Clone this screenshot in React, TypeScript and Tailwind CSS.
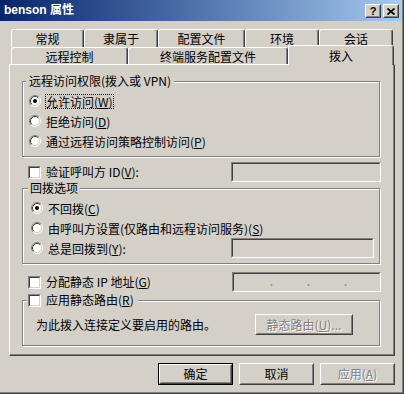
import React from "react";

function Raised({ className = "", children }: { className?: string; children?: React.ReactNode }) {
  return (
    <div className={`flex border border-t-white border-l-white border-r-[#404040] border-b-[#404040] ${className}`}>
      <div className="flex-1 flex items-center justify-center border border-t-[#d4d0c8] border-l-[#d4d0c8] border-r-[#808080] border-b-[#808080]">
        {children}
      </div>
    </div>
  );
}

function Sunken({ className = "", white = false, children }: { className?: string; white?: boolean; children?: React.ReactNode }) {
  return (
    <div className={`flex shrink-0 border border-t-[#808080] border-l-[#808080] border-r-white border-b-white ${className}`}>
      <div className={`flex-1 flex border border-t-[#404040] border-l-[#404040] border-r-[#d4d0c8] border-b-[#d4d0c8] ${white ? "bg-white" : "bg-[#d4d0c8]"}`}>
        {children}
      </div>
    </div>
  );
}

function Btn({ className = "", children, def = false, disabled = false }: { className?: string; children: React.ReactNode; def?: boolean; disabled?: boolean }) {
  const label = <span className={`leading-[14px] ${disabled ? "text-[#808080] [text-shadow:1px_1px_0_#fff]" : ""}`}>{children}</span>;
  if (def) {
    return (
      <div className={`flex border border-black ${className}`}>
        <Raised className="flex-1">{label}</Raised>
      </div>
    );
  }
  return <Raised className={className}>{label}</Raised>;
}

function Radio({ checked = false }: { checked?: boolean }) {
  return (
    <svg width="12" height="12" viewBox="0 0 12 12" className="shrink-0">
      <circle cx="6" cy="6" r="4.5" fill="#ffffff" />
      <path d="M9.89 2.11 A5.5 5.5 0 0 0 2.11 9.89" stroke="#808080" strokeWidth="1" fill="none" />
      <path d="M2.11 9.89 A5.5 5.5 0 0 0 9.89 2.11" stroke="#ffffff" strokeWidth="1" fill="none" />
      <path d="M9.18 2.82 A4.5 4.5 0 0 0 2.82 9.18" stroke="#404040" strokeWidth="1" fill="none" />
      <path d="M2.82 9.18 A4.5 4.5 0 0 0 9.18 2.82" stroke="#d4d0c8" strokeWidth="1" fill="none" />
      {checked && <circle cx="6" cy="6" r="2" fill="#000000" />}
    </svg>
  );
}

function Check() {
  return <Sunken white className="w-[13px] h-[13px]" />;
}

function RadioRow({ checked = false, focus = false, children, gap = "ml-[4px]" }: { checked?: boolean; focus?: boolean; children: React.ReactNode; gap?: string }) {
  return (
    <div className="flex items-center h-[20px]">
      <Radio checked={checked} />
      <span className={`${gap} border leading-[13px] whitespace-nowrap ${focus ? "border-dotted border-black" : "border-transparent"}`}>{children}</span>
    </div>
  );
}

function Tab({ w, children, selected = false, pad = "" }: { w: string; children: React.ReactNode; selected?: boolean; pad?: string }) {
  return (
    <div
      className={`relative shrink-0 flex items-center justify-center bg-[#d4d0c8] border-l border-t border-white border-r border-r-[#404040] rounded-tl-[3px] rounded-tr-[3px] shadow-[inset_-1px_0_0_#808080] ${w} ${
        selected ? "h-[20px] -mb-[1px] z-20" : "h-full"
      } ${pad}`}
    >
      <span className="leading-[14px] whitespace-nowrap">{children}</span>
    </div>
  );
}

function Group({ className = "", legend, children }: { className?: string; legend: React.ReactNode; children?: React.ReactNode }) {
  return (
    <div className={`relative w-[358px] shrink-0 border border-[#808080] shadow-[1px_1px_0_#fff,inset_1px_1px_0_#fff] ${className}`}>
      {legend}
      {children}
    </div>
  );
}

export default function App() {
  return (
    <div className="w-[404px] h-[394px] bg-[#d4d0c8] border-r border-b border-[#404040] font-['Noto_Sans_CJK_SC',sans-serif] text-[12px] text-black overflow-hidden">
      <div className="h-full border-r border-b border-[#808080] flex flex-col">
        {/* Title bar */}
        <div className="h-[21px] shrink-0 flex items-start bg-linear-to-r from-[#0a246a] to-[#a6caf0] pl-[4px] pr-[3px]">
          <span className="mt-[3px] text-white font-bold text-[12px] leading-[15px] font-['Liberation_Sans','Noto_Sans_CJK_SC',sans-serif]">
            benson 属性
          </span>
          <div className="ml-auto mt-[4px] flex gap-[2px]">
            <Raised className="w-[16px] h-[14px] bg-[#d4d0c8]">
              <span className="font-['Liberation_Sans',sans-serif] font-bold text-[11px] leading-[11px] text-black">?</span>
            </Raised>
            <Raised className="w-[16px] h-[14px] bg-[#d4d0c8]">
              <svg width="8" height="7" viewBox="0 0 8 7">
                <path d="M0.5 0.5 L7.5 6.5 M7.5 0.5 L0.5 6.5" stroke="#000" strokeWidth="1.7" />
              </svg>
            </Raised>
          </div>
        </div>

        {/* Tabs */}
        <div className="h-[43px] shrink-0 pt-[8px] relative z-10">
          <div className="flex ml-[11px] h-[18px]">
            <Tab w="w-[73px]">常规</Tab>
            <Tab w="w-[74px]">隶属于</Tab>
            <Tab w="w-[87px]">配置文件</Tab>
            <Tab w="w-[74px]">环境</Tab>
            <Tab w="w-[74px]">会话</Tab>
          </div>
          <div className="flex ml-[11px] h-[17px] items-end">
            <Tab w="w-[117px]" pad="pt-[2px]">远程控制</Tab>
            <Tab w="w-[160px]" pad="pt-[2px]">终端服务配置文件</Tab>
            <Tab w="w-[106px]" selected>拨入</Tab>
          </div>
        </div>

        {/* Panel */}
        <div className="ml-[9px] w-[386px] h-[292px] shrink-0 border-l border-t border-white border-r border-b border-r-[#404040] border-b-[#404040] shadow-[inset_-1px_-1px_0_#808080] flex flex-col">
          <Group
            className="ml-[12px] mt-[16px] h-[76px]"
            legend={
              <span className="absolute -top-[8px] left-[3px] bg-[#d4d0c8] px-[3px] leading-[14px] whitespace-nowrap">
                远程访问权限(拨入或 VPN)
              </span>
            }
          >
            <div className="pt-[9px] pl-[6px] flex flex-col">
              <RadioRow checked focus>
                允许访问(<u>W</u>)
              </RadioRow>
              <RadioRow>
                拒绝访问(<u>D</u>)
              </RadioRow>
              <RadioRow>
                通过远程访问策略控制访问(<u>P</u>)
              </RadioRow>
            </div>
          </Group>

          <div className="flex items-center h-[20px] mt-[5px] ml-[18px]">
            <div className="w-[203px] flex items-center">
              <Check />
              <span className="ml-[5px] leading-[14px] whitespace-nowrap">
                验证呼叫方 ID(<u>V</u>):
              </span>
            </div>
            <Sunken className="w-[150px] h-[20px]" />
          </div>

          <Group
            className="ml-[12px] mt-[6px] h-[76px]"
            legend={
              <span className="absolute -top-[8px] left-[5px] bg-[#d4d0c8] px-[2px] leading-[14px] whitespace-nowrap">
                回拨选项
              </span>
            }
          >
            <div className="pt-[9px] pl-[8px] flex flex-col">
              <RadioRow checked>
                不回拨(<u>C</u>)
              </RadioRow>
              <RadioRow>
                由呼叫方设置(仅路由和远程访问服务)(<u>S</u>)
              </RadioRow>
              <div className="flex items-center h-[20px]">
                <div className="w-[200px] flex items-center">
                  <RadioRow>
                    总是回拨到(<u>Y</u>):
                  </RadioRow>
                </div>
                <Sunken className="w-[143px] h-[20px]" />
              </div>
            </div>
          </Group>

          <div className="flex items-center h-[20px] mt-[8px] ml-[18px]">
            <div className="w-[204px] flex items-center">
              <Check />
              <span className="ml-[5px] leading-[14px] whitespace-nowrap">
                分配静态 IP 地址(<u>G</u>)
              </span>
            </div>
            <Sunken className="w-[149px] h-[20px]">
              <div className="flex pl-[2px] text-[#808080] leading-[14px]">
                <span className="w-[37px] text-right">.</span>
                <span className="w-[37px] text-right">.</span>
                <span className="w-[37px] text-right">.</span>
              </div>
            </Sunken>
          </div>

          <Group
            className="ml-[12px] mt-[8px] h-[46px]"
            legend={
              <span className="absolute -top-[8px] left-[4px] bg-[#d4d0c8] pl-[1px] pr-[4px] h-[14px] flex items-center whitespace-nowrap">
                <Check />
                <span className="ml-[5px] leading-[14px]">
                  应用静态路由(<u>R</u>)
                </span>
              </span>
            }
          >
            <div className="pt-[13px] pl-[13px] flex items-center">
              <div className="w-[219px] leading-[14px] whitespace-nowrap">为此拨入连接定义要启用的路由。</div>
              <Btn className="w-[98px] h-[21px]" disabled>
                静态路由(<u>U</u>)...
              </Btn>
            </div>
          </Group>
        </div>

        {/* Buttons */}
        <div className="flex justify-end gap-[6px] pr-[7px] mt-[7px]">
          <Btn className="w-[75px] h-[22px]" def>
            确定
          </Btn>
          <Btn className="w-[75px] h-[22px]">取消</Btn>
          <Btn className="w-[75px] h-[22px]" disabled>
            应用(<u>A</u>)
          </Btn>
        </div>
      </div>
    </div>
  );
}
